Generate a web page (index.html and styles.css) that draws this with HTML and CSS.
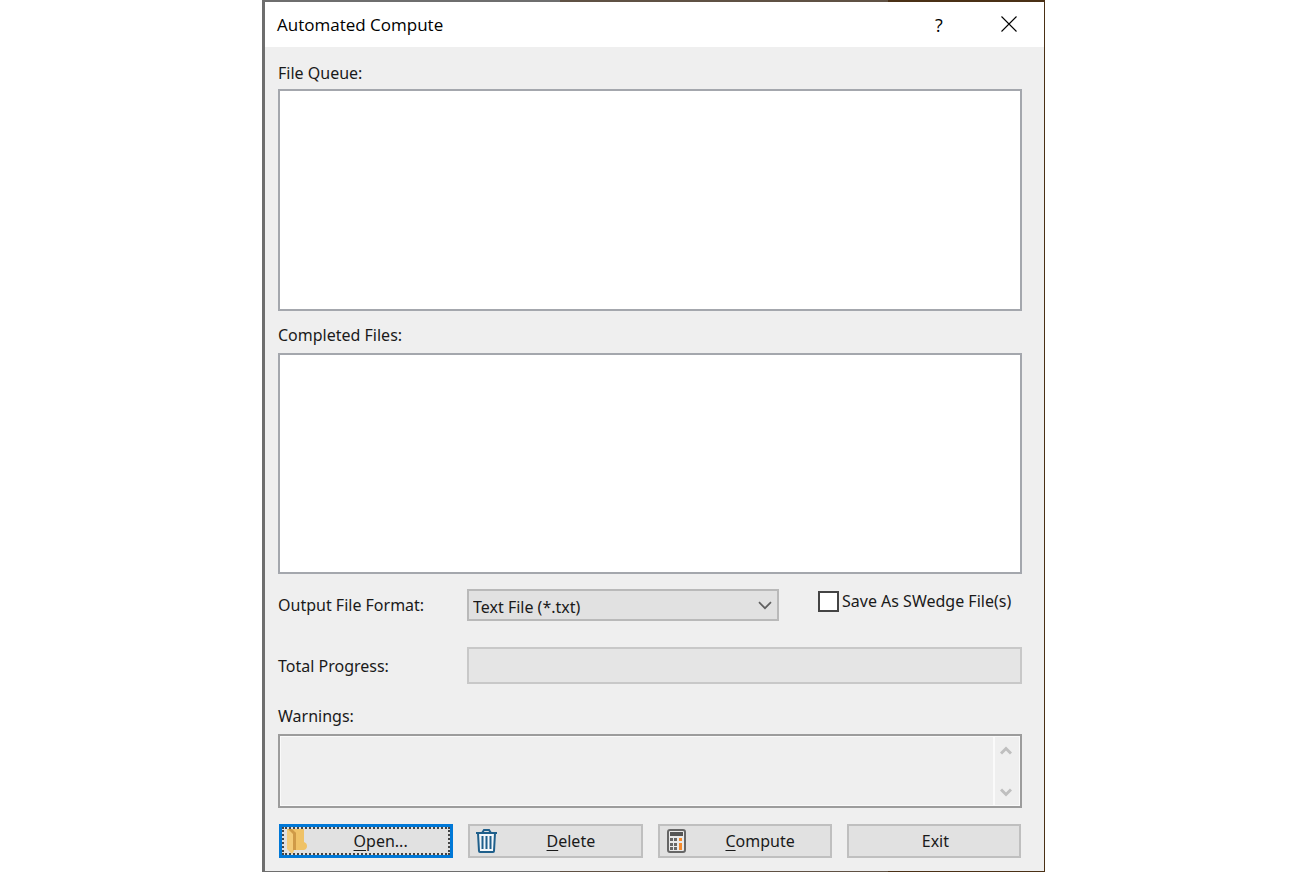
FILE: index.html
```
<!DOCTYPE html>
<html lang="en">

<head>
    <meta charset="UTF-8">
    <meta name="viewport" content="width=device-width, initial-scale=1.0">
    <title>Automated Compute</title>
    <link rel="stylesheet" href="styles.css">
</head>

<body>
    <div class="dialog">
        <header class="titlebar">
            <h1>Automated Compute</h1>
            <button type="button" class="title-btn" aria-label="Help">?</button>
            <button type="button" class="title-btn" aria-label="Close">
                <svg width="16" height="18" viewBox="0 0 16 18">
                    <path d="M0.500 0.500l15 15M15.500 0.500l-15 15" fill="none" stroke="#000" stroke-width="1.1" />
                </svg>
            </button>
        </header>

        <form class="content">
            <div class="field field-queue">
                <label for="queue">File Queue:</label>
                <select id="queue" class="list" size="8"></select>
            </div>
            <div class="field field-completed">
                <label for="completed">Completed Files:</label>
                <select id="completed" class="list" size="8"></select>
            </div>

            <div class="row row-format">
                <label for="format">Output File Format:</label>
                <div class="dropdown">
                    <select id="format">
                        <option>Text File (*.txt)</option>
                    </select>
                    <svg class="arrow" width="14" height="9" viewBox="0 0 14 9">
                        <path d="M1 1.200l6 6 6-6" fill="none" stroke="#606060" stroke-width="1.7" />
                    </svg>
                </div>
                <div class="check">
                    <input type="checkbox" id="swedge">
                    <label for="swedge">Save As SWedge File(s)</label>
                </div>
            </div>

            <div class="row row-progress">
                <label for="progress">Total Progress:</label>
                <progress id="progress" value="0" max="100"></progress>
            </div>

            <div class="field">
                <label for="warnings">Warnings:</label>
                <div class="warnings">
                    <textarea id="warnings" readonly></textarea>
                    <div class="scrollbar">
                        <svg width="12" height="9" viewBox="0 0 12 9">
                            <path d="M1 7.500l5-5 5 5" fill="none" stroke="#bfbfbf" stroke-width="3" />
                        </svg>
                        <svg width="12" height="9" viewBox="0 0 12 9">
                            <path d="M1 1.500l5 5 5-5" fill="none" stroke="#bfbfbf" stroke-width="3" />
                        </svg>
                    </div>
                </div>
            </div>

            <div class="buttons">
                <button type="button" class="btn btn-default">
                    <svg width="24" height="26" viewBox="0 0 24 26">
                        <path d="M2 1h17v13q3 1 3 4t-3 4H6L2 20z" fill="#efc267" />
                        <path d="M9 4l2 1v17H8z" fill="#cf9a47" />
                        <path d="M2 1l7 4v18l-2 3-5-5z" fill="#f3cb78" />
                        <path d="M3 1h4l4 4v17H8V6z" fill="#cf9a47" />
                    </svg>
                    <span><u>O</u>pen...</span>
                </button>
                <button type="button" class="btn">
                    <svg width="24" height="26" viewBox="0 0 24 26">
                        <path d="M3 5h17l-1 18q0 1-1 1H5q-1 0-1-1z" fill="#f4f8fb" stroke="#1f5f8b" stroke-width="2" />
                        <path d="M1 5h21" stroke="#1f5f8b" stroke-width="2" />
                        <path d="M7 5l2-3h5l2 3" fill="none" stroke="#1f5f8b" stroke-width="2" />
                        <path d="M7.500 8v13M11.500 8v13M15.500 8v13" stroke="#1f5f8b" stroke-width="2" />
                    </svg>
                    <span><u>D</u>elete</span>
                </button>
                <button type="button" class="btn">
                    <svg width="24" height="26" viewBox="0 0 24 26">
                        <rect x="3" y="2" width="17" height="22" rx="2" fill="#e9e9e9" stroke="#666" stroke-width="2" />
                        <path d="M5 4h13v4H5z" fill="#555" />
                        <path d="M5 10h3v3H5zM9 10h3v3H9zM5 15h3v3H5zM9 15h3v3H9zM5 19h3v3H5zM9 19h3v3H9z" fill="#666" />
                        <path d="M14 10h3v3h-3zM14 15h3v7h-3z" fill="#f58a2c" />
                    </svg>
                    <span><u>C</u>ompute</span>
                </button>
                <button type="button" class="btn btn-plain">Exit</button>
            </div>
        </form>
    </div>
</body>

</html>
```
FILE: styles.css
```
* {
    box-sizing: border-box;
}

body {
    margin: 0;
    padding-right: 1px;
    background-color: #fff;
    color: #1a1a1a;
    font-family: "Noto Sans", "Open Sans", sans-serif;
    font-size: 16px;
    line-height: 24px;
}

button,
select,
textarea {
    font: inherit;
    color: inherit;
}

.dialog {
    display: flex;
    flex-direction: column;
    max-width: 783px;
    min-height: 100vh;
    margin: 0 auto;
    background-color: #efefef;
    border-style: solid;
    border-width: 2px 1px 1px 3px;
    border-image: linear-gradient(to right, #6e6e6e 38%, #5f5144 38% 80%, #4a3015 80%) 2 1 1 3;
}

.titlebar {
    display: flex;
    height: 45px;
    padding-left: 12px;
    background-color: #fff;
    color: #000;
}

.titlebar h1 {
    flex: 1;
    margin: 0;
    font-family: "Open Sans", sans-serif;
    font-size: 17px;
    font-weight: normal;
    line-height: 45px;
}

.title-btn {
    display: flex;
    align-items: center;
    justify-content: center;
    width: 70px;
    padding: 0;
    background: none;
    border: none;
    font-family: "Open Sans", sans-serif;
    font-size: 18px;
}

.content {
    flex: 1;
    display: flex;
    flex-direction: column;
    padding: 14px 22px 13px 13px;
}

.field {
    display: flex;
    flex-direction: column;
    gap: 6px;
}

.field-queue,
.field-completed {
    flex: 1;
}

.field-queue {
    gap: 4px;
    margin-bottom: 12px;
}

.field-completed {
    margin-bottom: 15px;
}

.list {
    flex: 1;
    width: 100%;
    min-height: 120px;
    background-color: #fff;
    border: 2px solid #a4a7ad;
    border-radius: 0;
}

.row {
    display: grid;
    grid-template-columns: 189px 312px 1fr;
}

.row-format {
    margin-bottom: 24px;
    line-height: 32px;
}

.row-progress {
    margin-bottom: 19px;
    line-height: 38px;
}

.dropdown {
    position: relative;
}

.dropdown select {
    width: 100%;
    height: 32px;
    padding: 0 4px;
    appearance: none;
    background-color: #e1e1e1;
    border: 2px solid #b9b9b9;
    border-radius: 0;
}

.arrow {
    position: absolute;
    top: 12px;
    right: 7px;
    pointer-events: none;
}

.check {
    display: flex;
    align-items: center;
    gap: 3px;
    height: 24px;
    margin-left: 39px;
    white-space: nowrap;
}

.check input {
    width: 21px;
    height: 21px;
    margin: 0;
    appearance: none;
    background-color: #fff;
    border: 2px solid #444;
}

.check input:checked {
    background-color: #0078d7;
}

progress {
    grid-column: 2 / 4;
    width: 100%;
    height: 37px;
    appearance: none;
    background-color: #e5e5e5;
    border: 2px solid #c8c8c8;
}

progress::-webkit-progress-bar {
    background-color: #e5e5e5;
}

progress::-webkit-progress-value {
    background-color: #06b025;
}

.warnings {
    display: flex;
    height: 74px;
    border: 2px solid #9c9c9c;
    background-color: #efefef;
    box-shadow: inset 0 0 0 1px #fafafa;
}

.warnings textarea {
    flex: 1;
    resize: none;
    background: none;
    border: none;
    outline: none;
}

.scrollbar {
    display: flex;
    flex-direction: column;
    align-items: center;
    justify-content: space-between;
    width: 27px;
    padding: 10px 4px 9px 0;
    border-left: 2px solid #fafafa;
}

.buttons {
    display: grid;
    grid-template-columns: repeat(4, 1fr);
    gap: 15px;
    margin: 16px 1px 0;
}

.btn {
    display: flex;
    align-items: center;
    height: 34px;
    padding: 0 2px 0 5px;
    background-color: #e1e1e1;
    border: 2px solid #bfbfbf;
}

.btn span {
    flex: 1;
    padding-left: 4px;
}

.btn u {
    text-underline-offset: 3px;
}

.btn-default {
    padding-left: 3px;
    border: 3px solid #0078d7;
    outline: 2px dotted #444;
    outline-offset: -5px;
}

.btn-plain {
    justify-content: center;
}
```
